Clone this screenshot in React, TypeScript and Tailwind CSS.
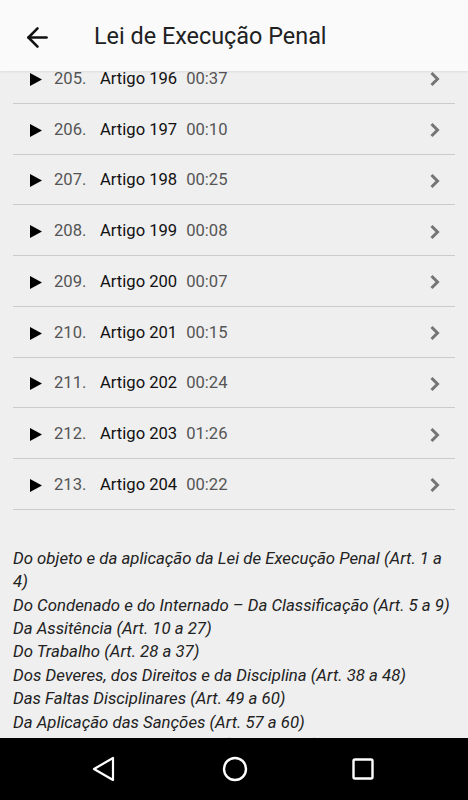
import { ArrowLeft } from 'lucide-react'

const rows = [
  { n: '205.', title: 'Artigo 196', time: '00:37' },
  { n: '206.', title: 'Artigo 197', time: '00:10' },
  { n: '207.', title: 'Artigo 198', time: '00:25' },
  { n: '208.', title: 'Artigo 199', time: '00:08' },
  { n: '209.', title: 'Artigo 200', time: '00:07' },
  { n: '210.', title: 'Artigo 201', time: '00:15' },
  { n: '211.', title: 'Artigo 202', time: '00:24' },
  { n: '212.', title: 'Artigo 203', time: '01:26' },
  { n: '213.', title: 'Artigo 204', time: '00:22' },
]

const chapters = [
  'Do objeto e da aplicação da Lei de Execução Penal (Art. 1 a 4)',
  'Do Condenado e do Internado – Da Classificação (Art. 5 a 9)',
  'Da Assitência (Art. 10 a 27)',
  'Do Trabalho (Art. 28 a 37)',
  'Dos Deveres, dos Direitos e da Disciplina (Art. 38 a 48)',
  'Das Faltas Disciplinares (Art. 49 a 60)',
  'Da Aplicação das Sanções (Art. 57 a 60)',
  'Do Procedimento Disciplinar (Art. 59 a 60)',
]

export default function App() {
  return (
    <div
      className="w-[468px] h-[800px] flex flex-col bg-[#efefef] overflow-hidden"
      style={{ fontFamily: 'Roboto, "Liberation Sans", sans-serif' }}
    >
      {/* Barra superior */}
      <header className="h-[71px] shrink-0 pt-[3px] bg-[#fafafa] flex items-center relative z-10 shadow-[0_1px_2px_rgba(0,0,0,0.08)]">
        <ArrowLeft className="ml-[22px] w-[31px] h-[31px] text-[#111]" strokeWidth={2} />
        <h1 className="ml-[41px] text-[23.4px] text-[#212121]">Lei de Execução Penal</h1>
      </header>

      {/* Lista rolada */}
      <div className="flex-1 overflow-hidden">
        <div className="-mt-[18px] px-[13px]">
          {rows.map((r) => (
            <div
              key={r.n}
              className="h-[50.75px] pt-[3px] flex items-center border-b border-[#cbcbcb] text-[16.6px]"
            >
              <svg width="12" height="13" viewBox="0 0 12 13" className="ml-[17px] shrink-0">
                <polygon points="0,0 12,6.5 0,13" fill="#000" />
              </svg>
              <span className="ml-[12px] w-[46px] text-[#555]">{r.n}</span>
              <span className="text-[#111]">{r.title}</span>
              <span className="ml-[9px] text-[#555]">{r.time}</span>
              <svg width="12" height="16" viewBox="0 0 12 16" className="ml-auto mr-[14px] shrink-0">
                <polyline points="2.5,2 8.5,8 2.5,14" fill="none" stroke="#757575" strokeWidth="3" />
              </svg>
            </div>
          ))}

          <div className="pt-[37px] text-[16.8px] italic leading-[23.4px] text-[#222]">
            {chapters.map((c) => (
              <p key={c}>{c}</p>
            ))}
          </div>
        </div>
      </div>

      {/* Barra de navegação */}
      <nav className="h-[62px] shrink-0 bg-black flex items-center">
        <svg width="24" height="26" viewBox="0 0 24 26" className="ml-[92px]">
          <polygon points="21,2 21,24 2,13" fill="none" stroke="#fff" strokeWidth="2.2" strokeLinejoin="round" />
        </svg>
        <svg width="26" height="26" viewBox="0 0 26 26" className="ml-[106px]">
          <circle cx="13" cy="13" r="11" fill="none" stroke="#fff" strokeWidth="2.4" />
        </svg>
        <svg width="22" height="22" viewBox="0 0 22 22" className="ml-[104px]">
          <rect x="1.5" y="1.5" width="19" height="19" rx="1.5" fill="none" stroke="#fff" strokeWidth="2.4" />
        </svg>
      </nav>
    </div>
  )
}
